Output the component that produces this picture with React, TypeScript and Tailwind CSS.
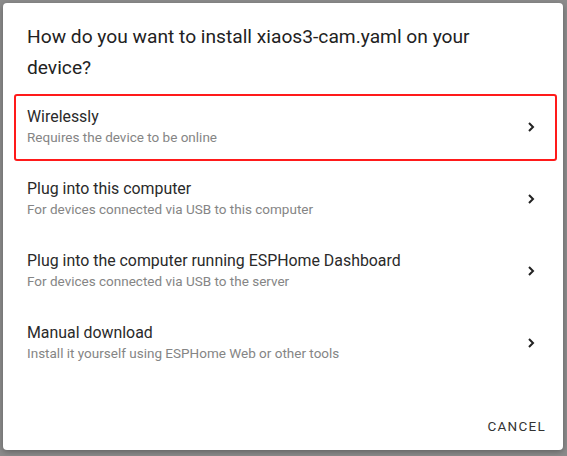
import React from "react";

const items = [
  { t: "Wirelessly", s: "Requires the device to be online", hl: true },
  { t: "Plug into this computer", s: "For devices connected via USB to this computer" },
  { t: "Plug into the computer running ESPHome Dashboard", s: "For devices connected via USB to the server" },
  { t: "Manual download", s: "Install it yourself using ESPHome Web or other tools" },
];

function Chevron() {
  return (
    <svg width="10" height="12" viewBox="0 0 10 12" className="text-[#222] mr-[1px]">
      <path d="M3 2l4 4-4 4" fill="none" stroke="currentColor" strokeWidth="2" />
    </svg>
  );
}

export default function App() {
  return (
    <div
      className="w-[567px] h-[456px] bg-[#8c8c8c] pt-[3px] pl-[3px] overflow-hidden"
      style={{ fontFamily: "Roboto, 'Noto Sans', sans-serif" }}
    >
      <div className="w-[560px] h-[447px] bg-white rounded-[4px] flex flex-col shadow-[0_2px_6px_rgba(0,0,0,0.3)]">
        <div className="pl-[24px] pr-[60px] pt-[18px] text-[19.2px] leading-[31px] text-[#222]">
          How do you want to install xiaos3-cam.yaml on your device?
        </div>
        <div className="mt-[8px] flex flex-col">
          {items.map((it) => (
            <div key={it.t} className="relative h-[72px] flex items-center pl-[24px] pr-[26px]">
              {it.hl && (
                <div className="absolute left-[11px] right-[6px] top-[3px] bottom-[2px] border-2 border-[#ff1a1a] rounded-[3px]" />
              )}
              <div className="flex-1 flex flex-col">
                <div className="text-[15.9px] leading-[20px] text-[#2a2a2a]">{it.t}</div>
                <div className="text-[13.5px] leading-[20px] text-[#858585]">{it.s}</div>
              </div>
              <Chevron />
            </div>
          ))}
        </div>
        <div className="flex-1" />
        <div className="flex justify-end pr-[17px] pb-[14px]">
          <div className="text-[13.5px] tracking-[1.25px] text-[#333] leading-[20px]">CANCEL</div>
        </div>
      </div>
    </div>
  );
}
